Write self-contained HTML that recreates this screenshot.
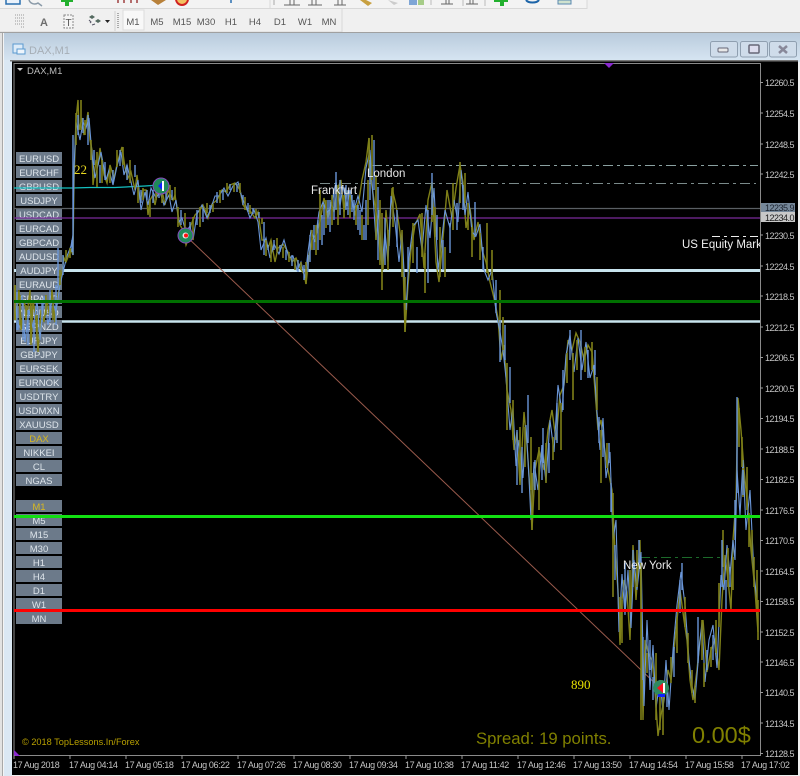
<!DOCTYPE html>
<html><head><meta charset="utf-8"><title>DAX,M1</title>
<style>
html,body{margin:0;padding:0;background:#f0f0f0}
body{width:800px;height:776px;overflow:hidden;position:relative}
svg{position:absolute;left:0;top:0;display:block}
text{font-family:"Liberation Sans",sans-serif}
.btn text{font-size:9.5px;fill:#dde4ea;text-anchor:middle}
.px text{font-size:9px;fill:#c4c4c4;letter-spacing:-.5px}
.tm text{font-size:9px;fill:#c4c4c4;letter-spacing:-.38px}
.tf text{font-size:9.5px;fill:#555;text-anchor:middle}
</style></head><body>
<svg width="800" height="776" viewBox="0 0 800 776" xmlns="http://www.w3.org/2000/svg">
<defs>
<linearGradient id="tb" x1="0" y1="0" x2="0" y2="1"><stop offset="0" stop-color="#b9cbdc"/><stop offset="1" stop-color="#d8e6f3"/></linearGradient>
<clipPath id="plot"><rect x="14" y="63" width="746" height="692"/></clipPath>
<clipPath id="lbl"><rect x="14" y="63" width="746" height="692"/></clipPath>
</defs>
<rect width="800" height="776" fill="#f0f0f0"/>
<!-- toolbars -->
<rect x="0" y="0" width="587" height="8" fill="#f3f3f3"/>
<path d="M0 8.500H587V0M270 0V8M342 9V32M0 32H342" stroke="#d8d8d8" fill="none"/>
<rect x="123" y="10" width="21" height="20" fill="#f8f8f8" stroke="#dcdcdc"/>
<path d="M6 0V4H20V0" fill="#eaf2fb" stroke="#2a6fb0" stroke-width="1.500"/>
<path d="M29 0a6 6 0 0 0 9 3l4 3" fill="none" stroke="#8a9aa8" stroke-width="1.500"/>
<path d="M61 0V2H65V6H69V2H73V0Z" fill="#22b02e"/>
<path d="M118 0V3M124 0V3M131 0V3M137 0V3" stroke="#a04040" stroke-width="1.500"/>
<path d="M151 0L158 5L166 0Z" fill="#b8813a"/>
<circle cx="182" cy="-1" r="6" fill="#f3c060" stroke="#d02020" stroke-width="2"/>
<path d="M231 0V3" stroke="#2a6fb0" stroke-width="1.500"/>
<path d="M274 0V5" stroke="#aaa"/>
<path d="M284 5H300M290 0V5M294 0V5M308 5H322M312 0V5M316 0V5M334 5H346M338 0V5M342 0V5" stroke="#666"/>
<path d="M360 0L368 6L372 3L366 0Z" fill="#c8a040"/>
<path d="M388 0L394 5L398 3Z" fill="#ccc"/>
<rect x="409" y="0" width="8" height="5" fill="#7fa6d6"/><rect x="418" y="0" width="6" height="5" fill="#a6cc88"/>
<path d="M431 0V5M463 0V6M485 0V6" stroke="#bbb"/>
<path d="M441 4H453M446 0V4M449 0V4M466 4H478M470 0V4M473 0V4" stroke="#666"/>
<path d="M494 0V2H500V6H504V2H508V0Z" fill="#22b02e"/>
<path d="M526 0a7 4 0 0 0 13 0" fill="none" stroke="#1c64a8" stroke-width="2"/>
<rect x="558" y="0" width="13" height="4" fill="#cfe2cf" stroke="#5a88b0"/>
<path d="M15 15H25M15 18H25M15 21H25M15 24H25M24 27H20" stroke="#9a9a9a" stroke-dasharray="1 1"/>
<text x="40" y="26" font-size="11" font-weight="bold" fill="#6e6e6e">A</text>
<rect x="64" y="15" width="9" height="13" fill="#f4f4f4" stroke="#8a8a8a" stroke-dasharray="2 1"/>
<text x="65.500" y="26" font-size="10" fill="#555">T</text>
<path d="M89 17l3-2 3 2-3 2zM95 21l3-2 3 2-3 2z" fill="#546a60"/>
<path d="M89 20l2 2-1 1M92 25l3-1" stroke="#556" fill="none"/>
<path d="M105 20H110L107.500 23Z" fill="#222"/>
<path d="M118 13V29" stroke="#aaa" stroke-dasharray="1 1" stroke-width="2"/>
<path d="M115 11V31" stroke="#d0d0d0"/>
<g class="tf">
<text x="133" y="25">M1</text><text x="157" y="25">M5</text><text x="182" y="25">M15</text><text x="206" y="25">M30</text><text x="231" y="25">H1</text><text x="255" y="25">H4</text><text x="280" y="25">D1</text><text x="305" y="25">W1</text><text x="329" y="25">MN</text>
</g>
<!-- MDI -->
<rect x="0" y="32" width="800" height="1" fill="#a0a0a0"/>
<rect x="0" y="33" width="3" height="743" fill="#e2e2e2"/>
<rect x="2" y="33" width="1" height="743" fill="#a8a8a8"/>
<rect x="3" y="33" width="797" height="29" fill="url(#tb)"/>
<rect x="3" y="60" width="9" height="716" fill="#dbe8f4"/>
<rect x="3" y="33" width="1" height="743" fill="#f4f4f4"/>
<path d="M13 44H23V53H13Z" fill="#dcebf8" stroke="#5a9ad0"/><path d="M17 49H25V54H17Z" fill="#eef5fc" stroke="#5a9ad0"/>
<text x="29" y="54" font-size="11" fill="#a6aeb6">DAX,M1</text>
<g fill="#cfdcea" stroke="#8f9fb0"><rect x="710.500" y="41.500" width="27" height="15.500" rx="2"/><rect x="740.500" y="41.500" width="27" height="15.500" rx="2"/><rect x="769.500" y="41.500" width="27" height="15.500" rx="2"/></g>
<rect x="718" y="48" width="10" height="4" rx="1" fill="#e8e8e8" stroke="#667"/>
<rect x="749" y="45" width="10" height="8" rx="1" fill="#dde" stroke="#667" stroke-width="1.500"/>
<path d="M779 46l8 7M787 46l-8 7" stroke="#889" stroke-width="2.500"/>
<!-- chart -->
<rect x="12" y="61" width="786" height="714" fill="#000"/>
<rect x="10" y="60" width="788" height="1.500" fill="#777"/>
<path d="M14 63.500H760.500V755.500H14" fill="none" stroke="#8a8a8a"/>
<path d="M14 63V756" stroke="#8a8a8a"/>
<path d="M604 63H614L609 68Z" fill="#8a2ad0"/>
<path d="M14 750L14 756H20Z" fill="#8a2ad0"/>
<path d="M17 68H23L20 71Z" fill="#cccccc"/>
<text x="27" y="74" font-size="9.500" fill="#bbbbbb">DAX,M1</text>
<!-- lines behind buttons -->
<path d="M14 270.500H760" stroke="#c8e4ee" stroke-width="3"/>
<path d="M14 321.500H760" stroke="#c8e4ee" stroke-width="2.500"/>
<!-- buttons -->
<g class="btn">
<g fill="#6c7a8a">
<rect x="16" y="152" width="46" height="12"/><rect x="16" y="166" width="46" height="12"/><rect x="16" y="180" width="46" height="12"/><rect x="16" y="194" width="46" height="12"/><rect x="16" y="208" width="46" height="12"/><rect x="16" y="222" width="46" height="12"/><rect x="16" y="236" width="46" height="12"/><rect x="16" y="250" width="46" height="12"/><rect x="16" y="264" width="46" height="12"/><rect x="16" y="278" width="46" height="12"/><rect x="16" y="292" width="46" height="12"/><rect x="16" y="306" width="46" height="12"/><rect x="16" y="320" width="46" height="12"/><rect x="16" y="334" width="46" height="12"/><rect x="16" y="348" width="46" height="12"/><rect x="16" y="362" width="46" height="12"/><rect x="16" y="376" width="46" height="12"/><rect x="16" y="390" width="46" height="12"/><rect x="16" y="404" width="46" height="12"/><rect x="16" y="418" width="46" height="12"/><rect x="16" y="432" width="46" height="12"/><rect x="16" y="446" width="46" height="12"/><rect x="16" y="460" width="46" height="12"/><rect x="16" y="474" width="46" height="12"/>
<rect x="16" y="500" width="46" height="12"/><rect x="16" y="514" width="46" height="12"/><rect x="16" y="528" width="46" height="12"/><rect x="16" y="542" width="46" height="12"/><rect x="16" y="556" width="46" height="12"/><rect x="16" y="570" width="46" height="12"/><rect x="16" y="584" width="46" height="12"/><rect x="16" y="598" width="46" height="12"/><rect x="16" y="612" width="46" height="12"/>
</g>
<text x="39" y="162">EURUSD</text><text x="39" y="176">EURCHF</text><text x="39" y="190">GBPUSD</text><text x="39" y="204">USDJPY</text><text x="39" y="218">USDCAD</text><text x="39" y="232">EURCAD</text><text x="39" y="246">GBPCAD</text><text x="39" y="260">AUDUSD</text><text x="39" y="274">AUDJPY</text><text x="39" y="288">EURAUD</text><text x="39" y="302">GBPAUD</text><text x="39" y="316">NZDUSD</text><text x="39" y="330">GBPNZD</text><text x="39" y="344">EURJPY</text><text x="39" y="358">GBPJPY</text><text x="39" y="372">EURSEK</text><text x="39" y="386">EURNOK</text><text x="39" y="400">USDTRY</text><text x="39" y="414">USDMXN</text><text x="39" y="428">XAUUSD</text><text x="39" y="442" style="fill:#d8b820">DAX</text><text x="39" y="456">NIKKEI</text><text x="39" y="470">CL</text><text x="39" y="484">NGAS</text>
<text x="39" y="510" style="fill:#d8b820">M1</text><text x="39" y="524">M5</text><text x="39" y="538">M15</text><text x="39" y="552">M30</text><text x="39" y="566">H1</text><text x="39" y="580">H4</text><text x="39" y="594">D1</text><text x="39" y="608">W1</text><text x="39" y="622">MN</text>
</g>
<!-- horizontal objects -->
<path d="M14 208.500H760" stroke="#5a5f64" stroke-width="1.200"/>
<path d="M14 218H760" stroke="#7a2a9a" stroke-width="1.200"/>
<path d="M14 188H72L90 187.500H115L145 186L160 185" stroke="#14c0c0" stroke-width="1.200" fill="none"/>
<path d="M372 165.500H758" stroke="#8aa0a0" stroke-dasharray="10 4 3 4"/>
<path d="M320 183.500H756" stroke="#7a8a8a" stroke-dasharray="10 4 3 4"/>
<path d="M712 236.500H758" stroke="#eeeeee" stroke-dasharray="8 4 3 4"/>
<path d="M640 557.500H722" stroke="#1c6a2a" stroke-dasharray="10 4 3 4"/>
<path d="M186 236L660 688" stroke="#9a5a4c" stroke-width="1"/>
<!-- price -->
<g clip-path="url(#plot)" fill="none">
<polyline stroke="#7f8018" stroke-width="1.400" points="15,285 16,320 19,290 21,330 24,300 27,315 30,290 31,345 33,300 36,320 38,352 41,310 44,322 47,300 50,318 52,290 55,322 58,295 62,272 64,258 66,262 71,250 73,255 74,180 76,120 78,100 79,130 82,118 84,135 86,125 88,112 90,140 92,150 93,185 96,160 98,165 100,148 104,175 107,183 110,165 114,178 118,160 122,147 125,168 128,178 131,172 135,190 137,175 140,200 143,190 146,190 148,215 150,200 153,195 155,205 158,190 163,195 165,205 168,190 173,200 175,195 178,215 180,225 183,230 186,245 188,240 191,225 195,215 200,210 203,205 206,212 208,218 212,204 217,200 222,190 226,192 230,185 235,183 240,190 243,205 247,210 251,212 255,218 258,212 262,240 265,240 268,248 271,240 275,262 278,248 283,244 288,252 292,262 296,258 300,268 304,274 306,284 309,256 312,240 316,235 320,222 324,198 328,218 331,202 334,212 337,190 341,180 344,212 347,192 351,198 355,214 359,200 362,180 366,162 369,138 371,180 374,200 377,218 380,252 383,270 386,210 389,246 392,188 396,205 400,232 403,262 405,332 408,285 411,250 415,225 420,214 424,268 428,200 432,182 436,262 439,282 443,238 447,190 452,218 456,188 460,165 463,182 466,228 470,208 474,240 478,222 482,250 486,262 490,282 494,298 498,318 501,360 504,345 507,390 511,410 514,450 517,432 520,485 524,412 527,445 530,490 532,530 535,470 539,450 544,470 548,430 552,410 556,440 560,395 564,385 568,340 572,350 576,333 580,342 584,360 588,345 592,352 595,390 598,430 601,420 604,445 608,470 612,490 615,552 618,590 620,645 622,600 624,580 627,592 630,640 633,545 636,600 640,540 643,720 645,640 649,655 652,660 655,690 658,736 661,715 664,700 668,670 671,680 675,640 680,590 684,620 687,640 690,680 693,700 697,670 700,640 703,620 707,672 711,650 715,640 719,670 722,600 725,555 728,580 731,610 733,540 736,500 738,398 741,430 744,470 748,510 751,550 755,590 758,632"/>
<polyline stroke="#6a96d8" stroke-width="1.100" points="15,300 18,330 22,295 25,342 29,310 33,328 37,300 40,340 44,296 48,325 52,300 56,312 60,285 63,272 67,256 71,246 73,235 74,170 76,122 80,140 83,122 86,128 89,118 92,155 95,178 98,165 101,152 106,180 109,170 113,185 117,166 121,152 124,175 127,165 131,182 134,195 138,180 141,210 145,192 148,205 151,188 156,198 160,192 164,205 169,195 172,212 176,200 179,222 182,218 186,232 190,226 193,240 197,214 202,205 207,218 211,208 215,196 219,196 224,188 228,196 233,186 238,182 242,198 246,206 250,218 254,210 258,222 261,250 266,238 270,258 274,244 279,254 284,240 289,258 293,256 297,270 301,262 305,278 308,252 311,230 315,242 319,212 323,202 327,212 330,210 333,196 336,182 340,206 343,186 347,206 350,190 354,210 358,196 362,212 366,168 370,150 373,196 376,240 379,210 382,268 385,232 388,262 391,196 395,222 399,262 402,232 406,310 409,258 413,226 418,220 422,250 426,205 430,238 434,188 438,270 441,246 445,210 450,228 454,200 458,222 461,170 465,215 468,192 472,232 476,236 480,224 484,270 488,280 492,270 496,312 500,332 503,350 506,378 510,430 513,408 516,466 519,440 523,478 526,425 529,478 531,520 534,462 538,490 542,445 546,482 550,420 554,452 558,385 562,412 566,355 570,335 574,372 578,338 582,370 586,342 590,378 594,365 597,412 600,450 603,418 606,478 610,452 613,540 616,520 619,632 622,574 625,615 628,570 631,628 634,560 637,590 641,552 644,706 647,620 650,690 653,645 656,708 660,680 663,712 666,660 669,710 673,650 677,605 681,572 685,605 689,660 692,686 695,700 699,650 702,622 705,682 709,640 713,625 717,668 721,575 724,590 727,545 730,575 733,540 735,560 737,470 740,515 743,460 746,530 750,490 754,575 757,600"/>
<path stroke="#7f8018" stroke-width="1.600" d="M15 285V320M20 295V325M26 305V320M31 300V340M37 315V340M46 295V315M53 300V320M60 270V285M66 250V262M70 248V258M76 113V145M81 100V130M85 120V135M91 140V160M97 152V187M102 160V183M110 168V183M117 150V167M123 147V165M130 160V183M138 187V203M143 188V200M150 200V217M156 186V200M162 185V203M170 185V200M175 187V200M178 207V227M185 213V233M193 217V240M200 207V227M207 203V213M213 204V212M220 190V203M227 183V193M234 184V192M240 183V193M245 197V210M250 205V214M256 209V216M262 218V224M266 240V256M271 243V262M277 238V252M283 247V258M289 252V262M295 258V270M301 262V270M306 262V284M312 230V250M316 225V255M320 190V240M326 200V228M332 195V225M338 185V225M344 195V218M350 195V218M356 205V225M362 215V240M368 180V225M369 138V175M372 135V180M376 175V240M380 200V265M382 213V290M388 230V270M393 187V227M402 230V277M405 277V332M413 223V263M422 213V257M425 253V293M432 195V222M435 207V237M440 227V277M445 247V277M453 183V230M460 162V203M465 173V203M468 203V230M472 227V257M480 233V260M487 223V273M492 250V280M500 290V330M503 317V350M507 363V430M513 400V440M520 427V477M525 427V467M531 437V490M532 473V530M539 447V510M546 443V483M553 437V460M561 403V450M567 353V383M573 353V400M577 340V370M585 347V372M592 342V370M597 377V410M601 430V483M607 443V468M613 493V597M620 597V633M622 600V643M630 570V610M637 550V587M641 563V720M647 653V673M656 653V720M660 697V730M663 690V735M671 657V683M677 617V653M685 597V627M688 633V663M692 670V693M695 687V703M702 620V660M704 663V687M711 647V667M716 620V653M719 583V627M723 530V567M728 548V587M733 557V590M739 408V447M742 437V467M743 468V497M747 467V510M749 513V547M752 530V557M754 557V587M757 570V613M758 600V640"/>
<path stroke="#6a96d8" stroke-width="1.400" d="M17 290V330M23 300V340M28 310V345M34 320V352M42 300V322M50 290V322M56 285V325M58 248V290M63 255V275M73 135V255M72 240V252M78 115V135M83 118V133M88 115V145M94 150V165M100 165V183M105 162V180M113 170V183M120 150V166M127 165V180M135 165V177M141 190V203M147 190V200M153 190V203M159 182V198M166 186V200M172 190V200M181 210V225M190 222V238M197 210V225M203 208V222M210 205V213M217 192V203M223 190V200M230 184V190M237 184V192M243 195V205M248 203V212M253 208V214M259 212V218M264 222V255M268 245V250M274 240V250M280 245V252M286 250V260M292 255V266M298 260V272M304 265V280M308 255V272M310 235V262M314 225V250M318 220V250M322 215V245M324 205V235M328 200V225M330 200V232M334 190V220M336 172V210M340 180V215M346 185V210M348 190V215M352 195V212M354 200V220M358 205V230M360 210V235M364 225V240M366 200V240M370 160V200M374 140V190M378 187V260M385 218V265M397 210V247M408 247V270M417 247V273M428 210V283M432 173V215M437 215V240M443 240V270M450 223V253M457 203V230M463 185V210M475 202V237M483 247V270M496 280V313M500 320V362M505 325V360M510 367V403M517 430V485M522 447V493M528 395V443M535 460V490M542 445V480M543 428V463M549 443V473M557 403V443M563 370V410M570 330V360M581 330V380M588 350V378M595 350V375M599 417V443M603 430V457M609 443V463M611 483V512M615 545V580M625 563V607M633 550V587M639 540V563M643 637V680M650 640V670M653 677V700M667 687V707M674 647V677M680 580V613M682 563V590M698 617V663M707 650V670M713 635V660M722 540V587M726 580V610M730 567V587M735 500V540M737 397V493M743 470V495"/>
</g>
<!-- thick lines on top -->
<path d="M14 301.500H760" stroke="#007000" stroke-width="3"/>
<path d="M14 516.500H760" stroke="#12e012" stroke-width="3"/>
<path d="M14 610.500H760" stroke="#ff0000" stroke-width="3"/>
<!-- markers -->
<circle cx="161" cy="186" r="8" fill="#1f8a5a" stroke="#8a4ac0" stroke-width="1"/>
<path d="M158 186L163 181V191Z" fill="#1020ff"/><rect x="162" y="181" width="2" height="10" fill="#fff"/>
<circle cx="185.500" cy="235.500" r="7.500" fill="#1f8a5a" stroke="#8a4ac0" stroke-width="1"/>
<circle cx="185.500" cy="235.500" r="3" fill="#e8e8e8"/><circle cx="186" cy="235.500" r="2" fill="#ff1010"/>
<circle cx="661" cy="688" r="8" fill="#2f8a60"/>
<path d="M657 688L663 683V693Z" fill="#ff1020"/><rect x="663" y="683" width="2" height="10" fill="#fff"/><rect x="658" y="694" width="7" height="3" fill="#1020ff"/>
<!-- chart text -->
<g clip-path="url(#lbl)">
<text x="74" y="174" font-size="13" fill="#e8d820" style="font-family:'Liberation Serif',serif">22</text>
<text x="571" y="689" font-size="13" fill="#e8e000" style="font-family:'Liberation Serif',serif">890</text>
<text x="311" y="194" font-size="11.500" fill="#e8e8e8">Frankfurt</text>
<text x="367" y="177" font-size="11.500" fill="#e8e8e8">London</text>
<text x="682" y="248" font-size="11.500" fill="#f0f0f0">US Equity Market</text>
<text x="623" y="569" font-size="11.500" fill="#e8e8e8">New York</text>
</g>
<text x="22" y="745" font-size="9.200" fill="#b8a000">© 2018 TopLessons.In/Forex</text>
<text x="476" y="744" font-size="16.700" fill="#808000">Spread: 19 points.</text>
<text x="692" y="743" font-size="23.500" fill="#808000">0.00$</text>
<!-- price axis -->
<g stroke="#9a9a9a"><path d="M760 82.500h3M760 113h3M760 144h3M760 174h3M760 235h3M760 266h3M760 296h3M760 327h3M760 357.500h3M760 388h3M760 418.500h3M760 449h3M760 479.500h3M760 510h3M760 540.500h3M760 571h3M760 601.500h3M760 632h3M760 662h3M760 692.500h3M760 723h3M760 753.500h3"/></g>
<g class="px">
<text x="765" y="86">12260.5</text><text x="765" y="117">12254.5</text><text x="765" y="148">12248.5</text><text x="765" y="178">12242.5</text><text x="765" y="239">12230.5</text><text x="765" y="270">12224.5</text><text x="765" y="300">12218.5</text><text x="765" y="331">12212.5</text><text x="765" y="361">12206.5</text><text x="765" y="392">12200.5</text><text x="765" y="422">12194.5</text><text x="765" y="453">12188.5</text><text x="765" y="483">12182.5</text><text x="765" y="514">12176.5</text><text x="765" y="544">12170.5</text><text x="765" y="575">12164.5</text><text x="765" y="605">12158.5</text><text x="765" y="636">12152.5</text><text x="765" y="666">12146.5</text><text x="765" y="696">12140.5</text><text x="765" y="727">12134.5</text><text x="765" y="757">12128.5</text>
</g>
<rect x="761" y="203" width="34" height="9" fill="#76889a"/>
<rect x="761" y="212" width="34" height="10" fill="#c8c8c8"/>
<text x="765" y="211" font-size="9" letter-spacing="-.5" fill="#1c2430">12235.9</text>
<text x="765" y="221" font-size="9" letter-spacing="-.5" fill="#1a1a1a">12234.0</text>
<!-- time axis -->
<path d="M14 755v4M70 755v4M126 755v4M182 755v4M238 755v4M294 755v4M350 755v4M406 755v4M462 755v4M518 755v4M574 755v4M630 755v4M686 755v4M742 755v4" stroke="#9a9a9a"/>
<g class="tm">
<text x="13" y="768">17 Aug 2018</text><text x="69" y="768">17 Aug 04:14</text><text x="125" y="768">17 Aug 05:18</text><text x="181" y="768">17 Aug 06:22</text><text x="237" y="768">17 Aug 07:26</text><text x="293" y="768">17 Aug 08:30</text><text x="349" y="768">17 Aug 09:34</text><text x="405" y="768">17 Aug 10:38</text><text x="461" y="768">17 Aug 11:42</text><text x="517" y="768">17 Aug 12:46</text><text x="573" y="768">17 Aug 13:50</text><text x="629" y="768">17 Aug 14:54</text><text x="685" y="768">17 Aug 15:58</text><text x="741" y="768">17 Aug 17:02</text>
</g>
</svg>
</body></html>
